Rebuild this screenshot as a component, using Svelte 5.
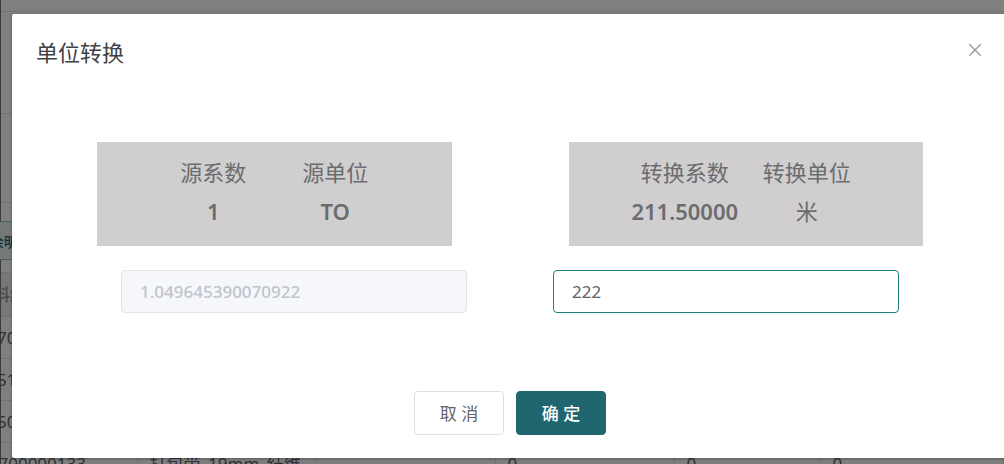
<script>
  let target = $state('222');
  const cards = [
    [
      { label: '源系数', value: '1' },
      { label: '源单位', value: 'TO' }
    ],
    [
      { label: '转换系数', value: '211.50000' },
      { label: '转换单位', value: '米' }
    ]
  ];
  const rows = [
    ['70', '', '', '', '', ''],
    ['51', '', '', '', '', ''],
    ['50', '', '', '', '', ''],
    ['-700000133', '打包带_19mm_纤维', '', '0', '0', '0']
  ];
</script>

<div class="screen">
  <div class="page">
    <div class="topbar"></div>
    <div class="filters"></div>
    <div class="toolbar"></div>
    <div class="actions"><button class="tag" type="button">余明</button></div>
    <table>
      <colgroup><col class="c1" /><col class="c2" /><col class="c2" /><col class="c2" /><col class="c3" /><col /></colgroup>
      <thead>
        <tr><th>料编</th><th></th><th></th><th></th><th></th><th></th></tr>
      </thead>
      <tbody>
        {#each rows as row}
          <tr>
            {#each row as cell}
              <td>{cell}</td>
            {/each}
          </tr>
        {/each}
      </tbody>
    </table>
  </div>

  <div class="overlay">
    <div class="dialog" role="dialog" aria-labelledby="dialog-title">
      <header>
        <h2 id="dialog-title">单位转换</h2>
        <button class="close" type="button" aria-label="关闭">
          <svg viewBox="0 0 14 14" width="14" height="14"><path d="M1.3 1.3 12.7 12.7M12.7 1.3 1.3 12.7" fill="none" stroke="#94979d" stroke-width="1.3" /></svg>
        </button>
      </header>
      <div class="cards">
        {#each cards as card}
          <dl class="card">
            {#each card as item}
              <div><dt>{item.label}</dt><dd>{item.value}</dd></div>
            {/each}
          </dl>
        {/each}
      </div>
      <div class="fields">
        <input type="text" value="1.049645390070922" disabled aria-label="源系数" />
        <input class="active" type="text" bind:value={target} aria-label="转换系数" />
      </div>
      <footer>
        <button class="btn" type="button">取 消</button>
        <button class="btn primary" type="button">确 定</button>
      </footer>
    </div>
  </div>
</div>

<style>
  :global(body) {
    overflow: hidden;
  }
  .screen {
    position: relative;
    height: 100vh;
    overflow: hidden;
    box-sizing: border-box;
    font-family: 'Noto Sans', 'Noto Sans CJK SC', sans-serif;
    font-size: 17px;
    color: #606266;
  }
  .screen * {
    box-sizing: border-box;
  }
  button,
  input {
    font: inherit;
  }
  .page {
    background: #fff;
    border-left: 1px solid #777;
  }
  .topbar {
    height: 12px;
    border-bottom: 1px solid #e6e6e6;
  }
  .filters {
    height: 102px;
    border-bottom: 1px solid #e0e0e0;
  }
  .toolbar {
    height: 89px;
    border-bottom: 1px solid #e0e0e0;
  }
  .actions {
    padding: 18px 0 12px;
  }
  .tag {
    display: block;
    height: 39px;
    width: 60px;
    margin-left: -18px;
    padding: 0 0 0 6px;
    border: 1px solid #8cc4c4;
    background: #e9f1f1;
    color: #1f666f;
    text-align: left;
    font-size: 14px;
    font-weight: 500;
  }
  table {
    width: 100%;
    table-layout: fixed;
    border-collapse: collapse;
    color: #606266;
    border-top: 1px solid #dfe3ea;
  }
  .c1 {
    width: 136px;
  }
  .c2 {
    width: 179px;
  }
  .c3 {
    width: 146px;
  }
  th,
  td {
    height: 42px;
    padding: 0 12px;
    border-bottom: 1px solid #dfe3ea;
    border-right: 1px solid #dfe3ea;
    text-align: left;
    line-height: 24px;
    white-space: nowrap;
  }
  th {
    height: 44px;
    background: #f1f1f4;
    color: #909399;
    font-weight: 500;
  }
  th:first-child,
  td:first-child {
    padding: 0;
    text-indent: -8px;
  }
  td:first-child {
    text-indent: -4px;
  }
  tr:last-child td:first-child {
    text-indent: -8px;
  }
  .overlay {
    position: absolute;
    inset: 0;
    padding: 14px 0 6px 12px;
    background: rgba(0, 0, 0, 0.5);
  }
  .dialog {
    margin-right: -4px;
    background: #fff;
    border-radius: 2px;
    box-shadow: 0 1px 3px rgba(0, 0, 0, 0.3);
  }
  header {
    display: flex;
    justify-content: space-between;
    align-items: flex-start;
    padding: 23px 26px 0 24px;
  }
  h2 {
    margin: 0;
    font-size: 22px;
    line-height: 30px;
    font-weight: 400;
    color: #404144;
  }
  .close {
    display: flex;
    padding: 6px 0;
    border: 0;
    background: none;
  }
  .cards {
    display: grid;
    grid-template-columns: 1fr 1fr;
    gap: 117px;
    padding: 75px 85px 0;
  }
  .card {
    display: grid;
    grid-template-columns: 122px 122px;
    justify-content: center;
    margin: 0;
    padding: 11px 0 15px;
    background: #d0cecf;
    font-size: 22px;
    line-height: 39px;
    text-align: center;
    color: #6a6c70;
  }
  dd {
    margin: 0;
    font-weight: 600;
  }
  .card:last-child div:last-child dd {
    font-weight: 400;
  }
  .fields {
    display: grid;
    grid-template-columns: 1fr 1fr;
    gap: 86px;
    padding: 24px 109px 0;
  }
  input {
    width: 100%;
    height: 43px;
    padding: 0 18px;
    border: 1px solid #dfe4ed;
    border-radius: 4px;
    background: #fff;
    color: #606266;
    outline: none;
  }
  input:disabled {
    background: #f5f7fb;
    color: #c0c4cc;
    font-weight: 500;
  }
  input.active {
    border-color: #1f7f85;
  }
  footer {
    display: flex;
    justify-content: center;
    gap: 12px;
    padding: 78px 0 23px;
  }
  .btn {
    width: 90px;
    height: 44px;
    padding: 0 0 2px;
    border: 1px solid #dcdfe6;
    border-radius: 4px;
    background: #fff;
    color: #606266;
  }
  .btn.primary {
    border-color: #1f666f;
    background: #1f666f;
    color: #fff;
    font-weight: 500;
  }
</style>
